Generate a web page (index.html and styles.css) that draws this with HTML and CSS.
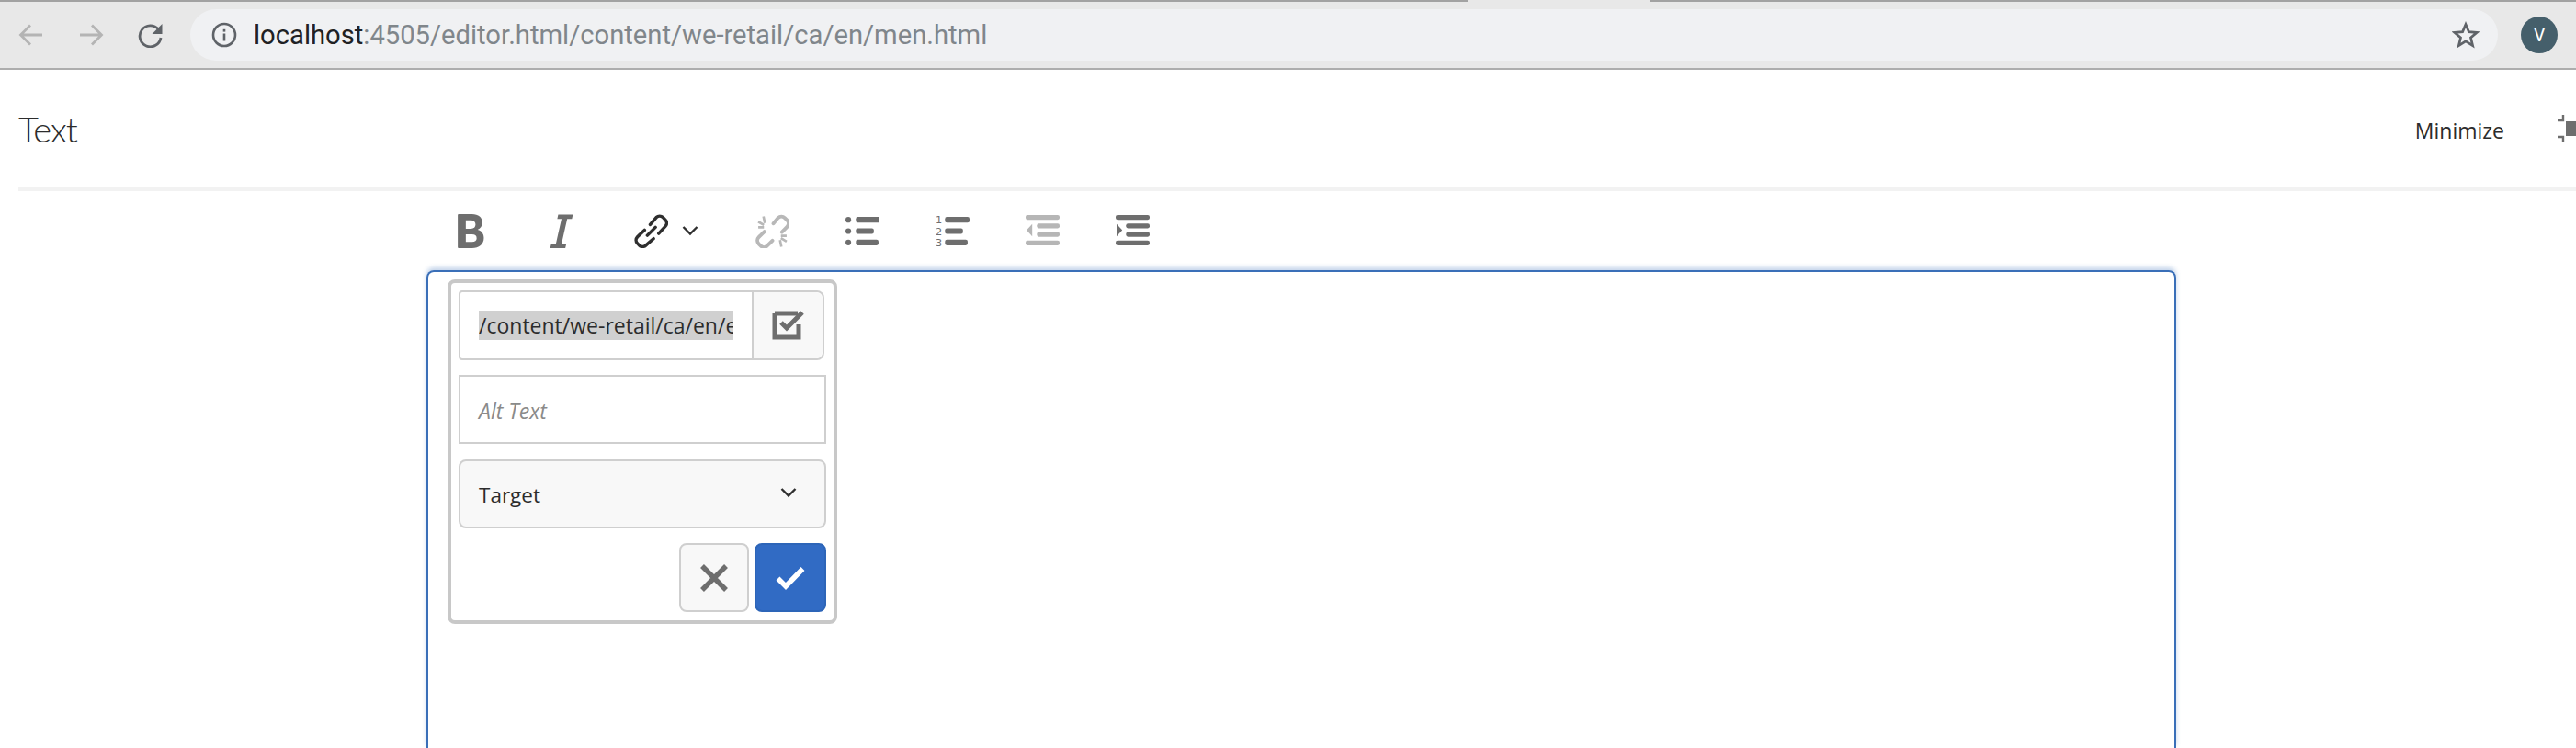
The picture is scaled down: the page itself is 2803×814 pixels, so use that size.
FILE: index.html
```html
<!DOCTYPE html>
<html lang="en">
<head>
<meta charset="utf-8">
<title>Text</title>
<link rel="stylesheet" href="styles.css">
</head>
<body>
<div class="browser-bar">
  <span class="tab-notch"></span>
  <div class="nav-icons">
    <svg class="nav-icon" viewBox="0 0 28 28"><path d="M26 14H3M13 3.500 2.500 14 13 24.500" fill="none" stroke="#b4b4b4" stroke-width="2.800"/></svg>
    <svg class="nav-icon" viewBox="0 0 28 28"><path d="M2 14h23M15 3.500 25.500 14 15 24.500" fill="none" stroke="#b4b4b4" stroke-width="2.800"/></svg>
    <svg class="nav-icon" viewBox="0 0 28 28"><path d="M22.500 8A11.500 11.500 0 1 0 25 17" fill="none" stroke="#5f6368" stroke-width="2.800"/><path d="M26.500 2v11h-11z" fill="#5f6368"/></svg>
  </div>
  <div class="omnibox">
    <svg class="info-icon" viewBox="0 0 28 28"><circle cx="14" cy="14" r="12" fill="none" stroke="#5f6368" stroke-width="2.600"/><rect x="12.700" y="12.500" width="2.600" height="8" fill="#5f6368"/><rect x="12.700" y="7.800" width="2.600" height="2.800" fill="#5f6368"/></svg>
    <div class="url"><span class="url-host">localhost</span>:4505/editor.html/content/we-retail/ca/en/men.html</div>
    <svg class="star-icon" viewBox="0 0 30 30"><path d="M15 3.500l3.400 8.100 8.800.7-6.700 5.700 2.100 8.600L15 21.900l-7.600 4.700 2.100-8.600-6.700-5.700 8.800-.7z" fill="none" stroke="#5f6368" stroke-width="2.700"/></svg>
  </div>
  <div class="avatar">V</div>
</div>

<header class="dialog-head">
  <h1 class="dialog-title">Text</h1>
  <div class="dialog-actions">
    <span class="minimize">Minimize</span>
    <svg class="fullscreen-icon" viewBox="0 0 20 32"><path d="M0 7h6V1" fill="none" stroke="#6e6e6e" stroke-width="2.400"/><path d="M0 25h6v6" fill="none" stroke="#6e6e6e" stroke-width="2.400"/><rect x="9" y="8" width="11" height="16" fill="#6e6e6e"/></svg>
  </div>
</header>

<main class="editor-wrap">
  <div class="toolbar">
    <button class="tool">
      <svg class="tool-icon" viewBox="0 0 36 36"><path fill-rule="evenodd" d="M5 0h14c7 0 11 3.500 11 9 0 3.600-2 6.400-5 7.600 4 1 6.600 4.200 6.600 8.800 0 6.600-5 10.600-12.600 10.600H5a1 1 0 0 1-1-1V1a1 1 0 0 1 1-1zm7.500 6.500v9H18c3 0 4.800-1.700 4.800-4.500s-1.800-4.500-4.800-4.500zm0 15v8H19c3.200 0 5-1.400 5-4s-1.800-4-5-4z" fill="#6e6e6e"/></svg>
    </button>
    <button class="tool">
      <svg class="tool-icon" viewBox="0 0 36 36"><path d="M15 .5h15.500l-1 4.500h-5L18.500 31.500h5l-1 4.500H6.500l1-4.500h5L18.500 5h-4.500z" fill="#6e6e6e"/></svg>
    </button>
    <button class="tool tool-wide">
      <svg class="tool-icon" viewBox="0 0 36 36"><g fill="none" stroke="#2f2f2f" stroke-width="3.400" stroke-linecap="round" stroke-linejoin="round"><path d="M17 11l6.500-7.500a5 5 0 0 1 7 0l2.500 2.500a5 5 0 0 1 0 7L26 20.500"/><path d="M11 17l-7.500 7a5 5 0 0 0 0 7l2 2a5 5 0 0 0 7 0L20.500 26"/><path d="M14 22.500 22.500 14"/></g></svg>
      <svg class="chevron" viewBox="0 0 18 12"><path d="M1.500 2 9 9.500 16.500 2" fill="none" stroke="#2f2f2f" stroke-width="2.400"/></svg>
    </button>
    <button class="tool">
      <svg class="tool-icon" viewBox="0 0 36 36"><g fill="none" stroke="#b8b8b8" stroke-width="3.800" stroke-linecap="round"><path d="M19 10l5-6a5 5 0 0 1 7 0l2.500 2.500a5 5 0 0 1 0 7L28 19"/><path d="M9.500 18.500l-6 6a5 5 0 0 0 0 7l2 2a5 5 0 0 0 7 0L18 28"/></g><g stroke="#b8b8b8" stroke-width="2.600"><path d="M8.500 2.500l1.500 7M3 8l6 3.500M3 14h6M27.500 34.500l-1.500-7M33 29l-6-3.500M33 23h-6"/></g></svg>
    </button>
    <button class="tool">
      <svg class="tool-icon" viewBox="0 0 36 36"><g fill="#6e6e6e"><circle cx="3" cy="6" r="3"/><circle cx="3" cy="18" r="3"/><circle cx="3" cy="30" r="3"/><rect x="11" y="3" width="26" height="6" rx="2"/><rect x="11" y="15" width="19" height="6" rx="2"/><rect x="11" y="27" width="24" height="6" rx="2"/></g></svg>
    </button>
    <button class="tool">
      <svg class="tool-icon" viewBox="0 0 36 36"><g fill="#6e6e6e"><rect x="10" y="3" width="26" height="6" rx="2"/><rect x="10" y="15" width="19" height="6" rx="2"/><rect x="10" y="27" width="24" height="6" rx="2"/></g><g class="num-glyphs"><text x="0" y="10">1</text><text x="0" y="22">2</text><text x="0" y="34">3</text></g></svg>
    </button>
    <button class="tool">
      <svg class="tool-icon" viewBox="0 0 36 36"><g fill="#b6b6b6"><rect x="0" y="1" width="36" height="5" rx="2"/><rect x="12" y="10" width="24" height="5" rx="2"/><rect x="12" y="19" width="24" height="5" rx="2"/><rect x="0" y="28" width="36" height="5" rx="2"/><path d="M7 10.500v13L1 17z"/></g></svg>
    </button>
    <button class="tool">
      <svg class="tool-icon" viewBox="0 0 36 36"><g fill="#6e6e6e"><rect x="0" y="1" width="36" height="5" rx="2"/><rect x="11" y="10" width="25" height="5" rx="2"/><rect x="11" y="19" width="25" height="5" rx="2"/><rect x="0" y="28" width="36" height="5" rx="2"/><path d="M1 10.500v13L7 17z"/></g></svg>
    </button>
  </div>

  <section class="editor">
    <form class="link-popover">
      <div class="path-group">
        <div class="path-field"><span class="path-text">/content/we-retail/ca/en/experience</span></div>
        <button type="button" class="path-btn">
          <svg class="path-icon" viewBox="0 0 36 32"><path d="M3 3h25M3 3v26h26V15" fill="none" stroke="#6e6e6e" stroke-width="5"/><path d="M10 13l6 6L33 2" fill="none" stroke="#6e6e6e" stroke-width="5"/></svg>
        </button>
      </div>
      <div class="alt-field">Alt Text</div>
      <div class="target-field">
        <span>Target</span>
        <svg class="target-chevron" viewBox="0 0 18 12"><path d="M1.500 2 9 9.500 16.500 2" fill="none" stroke="#2f2f2f" stroke-width="2.400"/></svg>
      </div>
      <div class="popover-actions">
        <button type="button" class="act-btn act-cancel">
          <svg class="act-icon" viewBox="0 0 32 32"><path d="M3 3l26 26M29 3 3 29" fill="none" stroke="#6e6e6e" stroke-width="5.500"/></svg>
        </button>
        <button type="button" class="act-btn act-ok">
          <svg class="act-icon" viewBox="0 0 32 26"><path d="M2.500 13.500 11 22 29.500 3" fill="none" stroke="#fff" stroke-width="5.500"/></svg>
        </button>
      </div>
    </form>
  </section>
</main>
</body>
</html>
```
FILE: styles.css
```css
* { box-sizing: border-box; }
html, body { margin: 0; padding: 0; height: 100%; overflow: hidden; background: #fff; }
body { display: flex; flex-direction: column; font-family: "Open Sans", "Liberation Sans", sans-serif; color: #2c2c2c; }

.browser-bar {
  position: relative; flex: none;
  display: flex; align-items: center; height: 76px;
  background: #e8e8e8; border-top: 2px solid #a2a2a2; border-bottom: 2px solid #adadad;
  padding: 0 20px 0 20px;
}
.tab-notch { position: absolute; left: 1597px; top: -2px; width: 198px; height: 2px; background: #e8e8e8; }
.nav-icons { display: flex; gap: 37px; width: 187px; }
.nav-icon { width: 28px; height: 28px; flex: none; }
.omnibox {
  flex: 1; height: 56px; border-radius: 28px; background: #f0f1f3;
  display: flex; align-items: center; padding: 0 20px 0 23px;
}
.info-icon { width: 28px; height: 28px; flex: none; }
.url { margin-left: 18px; flex: 1; font: 29.200px Roboto, sans-serif; color: #80868b; white-space: nowrap; }
.url-host { color: #202124; }
.star-icon { width: 30px; height: 30px; flex: none; }
.avatar {
  width: 40px; height: 40px; border-radius: 50%; background: #455f6b; color: #fff; flex: none;
  margin-left: 25px; display: flex; align-items: center; justify-content: center; font: 20px Roboto, sans-serif;
}

.dialog-head {
  flex: none;
  display: flex; align-items: center; justify-content: space-between;
  height: 132px; margin-left: 20px; border-bottom: 4px solid #f2f2f2;
}
.dialog-title { margin: 0; font: 300 38px Lato, sans-serif; letter-spacing: -1px; color: #2c2c2c; }
.dialog-actions { display: flex; align-items: center; }
.minimize { font-size: 23px; color: #2c2c2c; margin-right: 58px; padding-top: 3px; }
.fullscreen-icon { width: 20px; height: 32px; flex: none; }

.editor-wrap { flex: 1; min-height: 0; display: flex; flex-direction: column; padding-left: 463px; padding-right: 435px; }
.toolbar { flex: none; display: flex; height: 86px; align-items: center; }
.tool { width: 98px; height: 86px; padding: 0; border: 0; background: none; display: flex; align-items: center; justify-content: center; flex: none; }
.tool-wide { width: 132px; justify-content: flex-start; padding-left: 31px; }
.tool-icon { width: 37px; height: 37px; flex: none; }
.chevron { width: 18px; height: 12px; margin-left: 15px; flex: none; }
.num-glyphs { font: 11px "DejaVu Sans", sans-serif; fill: #6e6e6e; }

.editor {
  flex: 1; min-height: 0; margin-left: 1px; border: 2px solid #3a6fb8; border-bottom: 0; border-radius: 8px 8px 0 0;
  box-shadow: 0 -3px 5px rgba(58,111,184,.3); padding: 8px 0 0 21px;
}
.link-popover {
  width: 424px; height: 375px; border: 4px solid #c8c8c8; border-radius: 8px; background: #fff;
  padding: 8px; display: flex; flex-direction: column; font-size: 23px;
}
.path-group { flex: none; display: flex; width: 398px; height: 76px; border: 2px solid #cfcfcf; border-radius: 4px 8px 8px 4px; }
.path-field { flex: 1; min-width: 0; padding: 20px 20px 0 20px; border-right: 2px solid #cfcfcf; }
.path-text { display: block; overflow: hidden; white-space: nowrap; background: #d0d0d0; height: 32px; line-height: 32px; color: #2c2c2c; }
.path-btn { width: 75px; border: 0; background: #f8f8f8; border-radius: 0 8px 8px 0; padding: 0; display: flex; align-items: center; justify-content: center; }
.path-icon { width: 36px; height: 32px; }
.alt-field {
  flex: none; width: 400px; height: 75px; margin-top: 16px; border: 2px solid #cfcfcf; padding: 2px 20px 0;
  display: flex; align-items: center; font-style: italic; color: #8a8a8a;
}
.target-field {
  flex: none; width: 400px; height: 75px; margin-top: 17px; border: 2px solid #cfcfcf; border-radius: 8px;
  background: #f8f8f8; padding: 2px 30px 0 20px; display: flex; align-items: center; justify-content: space-between;
  font-size: 22.500px; color: #2c2c2c;
}
.target-chevron { width: 18px; height: 12px; margin-top: -6px; }
.popover-actions { flex: none; display: flex; justify-content: flex-end; gap: 6px; width: 400px; margin-top: 16px; }
.act-btn { height: 75px; border-radius: 8px; padding: 0; display: flex; align-items: center; justify-content: center; }
.act-cancel { width: 76px; background: #f8f8f8; border: 2px solid #cfcfcf; }
.act-ok { width: 78px; background: #316bc4; border: 2px solid #2d65b8; }
.act-icon { width: 32px; height: 32px; }
```
